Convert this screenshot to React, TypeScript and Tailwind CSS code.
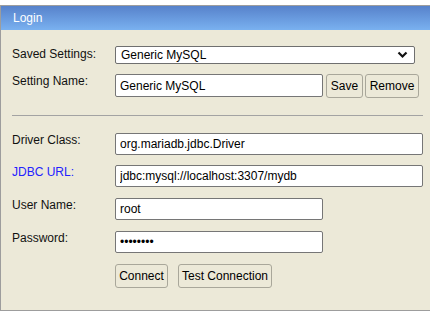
import React from "react";

const font = { fontFamily: '"Liberation Sans", Arial, sans-serif' };

function Label({ children, blue }: { children: React.ReactNode; blue?: boolean }) {
  return (
    <div
      className={
        "w-[103px] shrink-0 text-[12px] leading-[14px] " +
        (blue ? "text-[#2222ff]" : "text-[#111]")
      }
    >
      {children}
    </div>
  );
}

function TextInput({ value, w, h = "h-[22px]", type = "text" }: { value: string; w: string; h?: string; type?: string }) {
  return (
    <input
      readOnly
      type={type}
      value={value}
      className={
        w +
        " " +
        h +
        " box-border rounded-[2px] border border-[#767676] bg-white pl-[4px] text-[12px] text-black outline-none"
      }
      style={font}
    />
  );
}

function Btn({ children, w }: { children: React.ReactNode; w: string }) {
  return (
    <button
      className={
        w +
        " h-[24px] box-border shrink-0 rounded-[3px] border border-[#a9a79a] bg-[#ece9d8] text-center text-[12px] leading-[14px] text-black"
      }
      style={font}
    >
      {children}
    </button>
  );
}

export default function App() {
  return (
    <div className="w-[430px] h-[311px] bg-white pt-[5px] overflow-hidden" style={font}>
      <div className="w-[440px] box-border border-l border-t border-b border-[#9d9d9d] bg-[#ece9d8]">
        <div className="h-[24px] flex items-center pl-[12px] text-[12px] text-white bg-gradient-to-b from-[#5782cb] to-[#7ab1f0]">
          Login
        </div>
        <div className="pl-[11px] pt-[16px] pb-[22px]">
          <div className="flex items-start">
            <div className="pt-[1px]">
              <Label>Saved Settings:</Label>
            </div>
            <div className="w-[300px] h-[18px] box-border rounded-[2px] border border-[#6f6f6f] bg-white flex items-center justify-between pl-[5px] pr-[6px]">
              <span className="text-[12px] leading-[14px] text-black">Generic MySQL</span>
              <svg width="11" height="8" viewBox="0 0 11 8">
                <polyline points="1.5,1.5 5.5,5.5 9.5,1.5" fill="none" stroke="#111" strokeWidth="2.2" />
              </svg>
            </div>
          </div>

          <div className="mt-[10px] flex items-start">
            <Label>Setting Name:</Label>
            <TextInput value="Generic MySQL" w="w-[208px]" h="h-[23px]" />
            <div className="ml-[3px] flex gap-[2px]">
              <Btn w="w-[37px]">Save</Btn>
              <Btn w="w-[54px]">Remove</Btn>
            </div>
          </div>

          <div className="mt-[17px] h-px w-[411px] bg-[#a3a3a3]" />

          <div className="mt-[17px] flex items-start">
            <Label>Driver Class:</Label>
            <TextInput value="org.mariadb.jdbc.Driver" w="w-[308px]" />
          </div>
          <div className="mt-[10px] flex items-start">
            <Label blue>JDBC URL:</Label>
            <TextInput value="jdbc:mysql://localhost:3307/mydb" w="w-[308px]" />
          </div>
          <div className="mt-[11px] flex items-start">
            <Label>User Name:</Label>
            <TextInput value="root" w="w-[208px]" />
          </div>
          <div className="mt-[11px] flex items-start">
            <Label>Password:</Label>
            <TextInput value="12345678" type="password" w="w-[208px]" />
          </div>
          <div className="mt-[11px] flex pl-[103px] gap-[10px]">
            <Btn w="w-[53px]">Connect</Btn>
            <Btn w="w-[94px]">Test Connection</Btn>
          </div>
        </div>
      </div>
    </div>
  );
}
